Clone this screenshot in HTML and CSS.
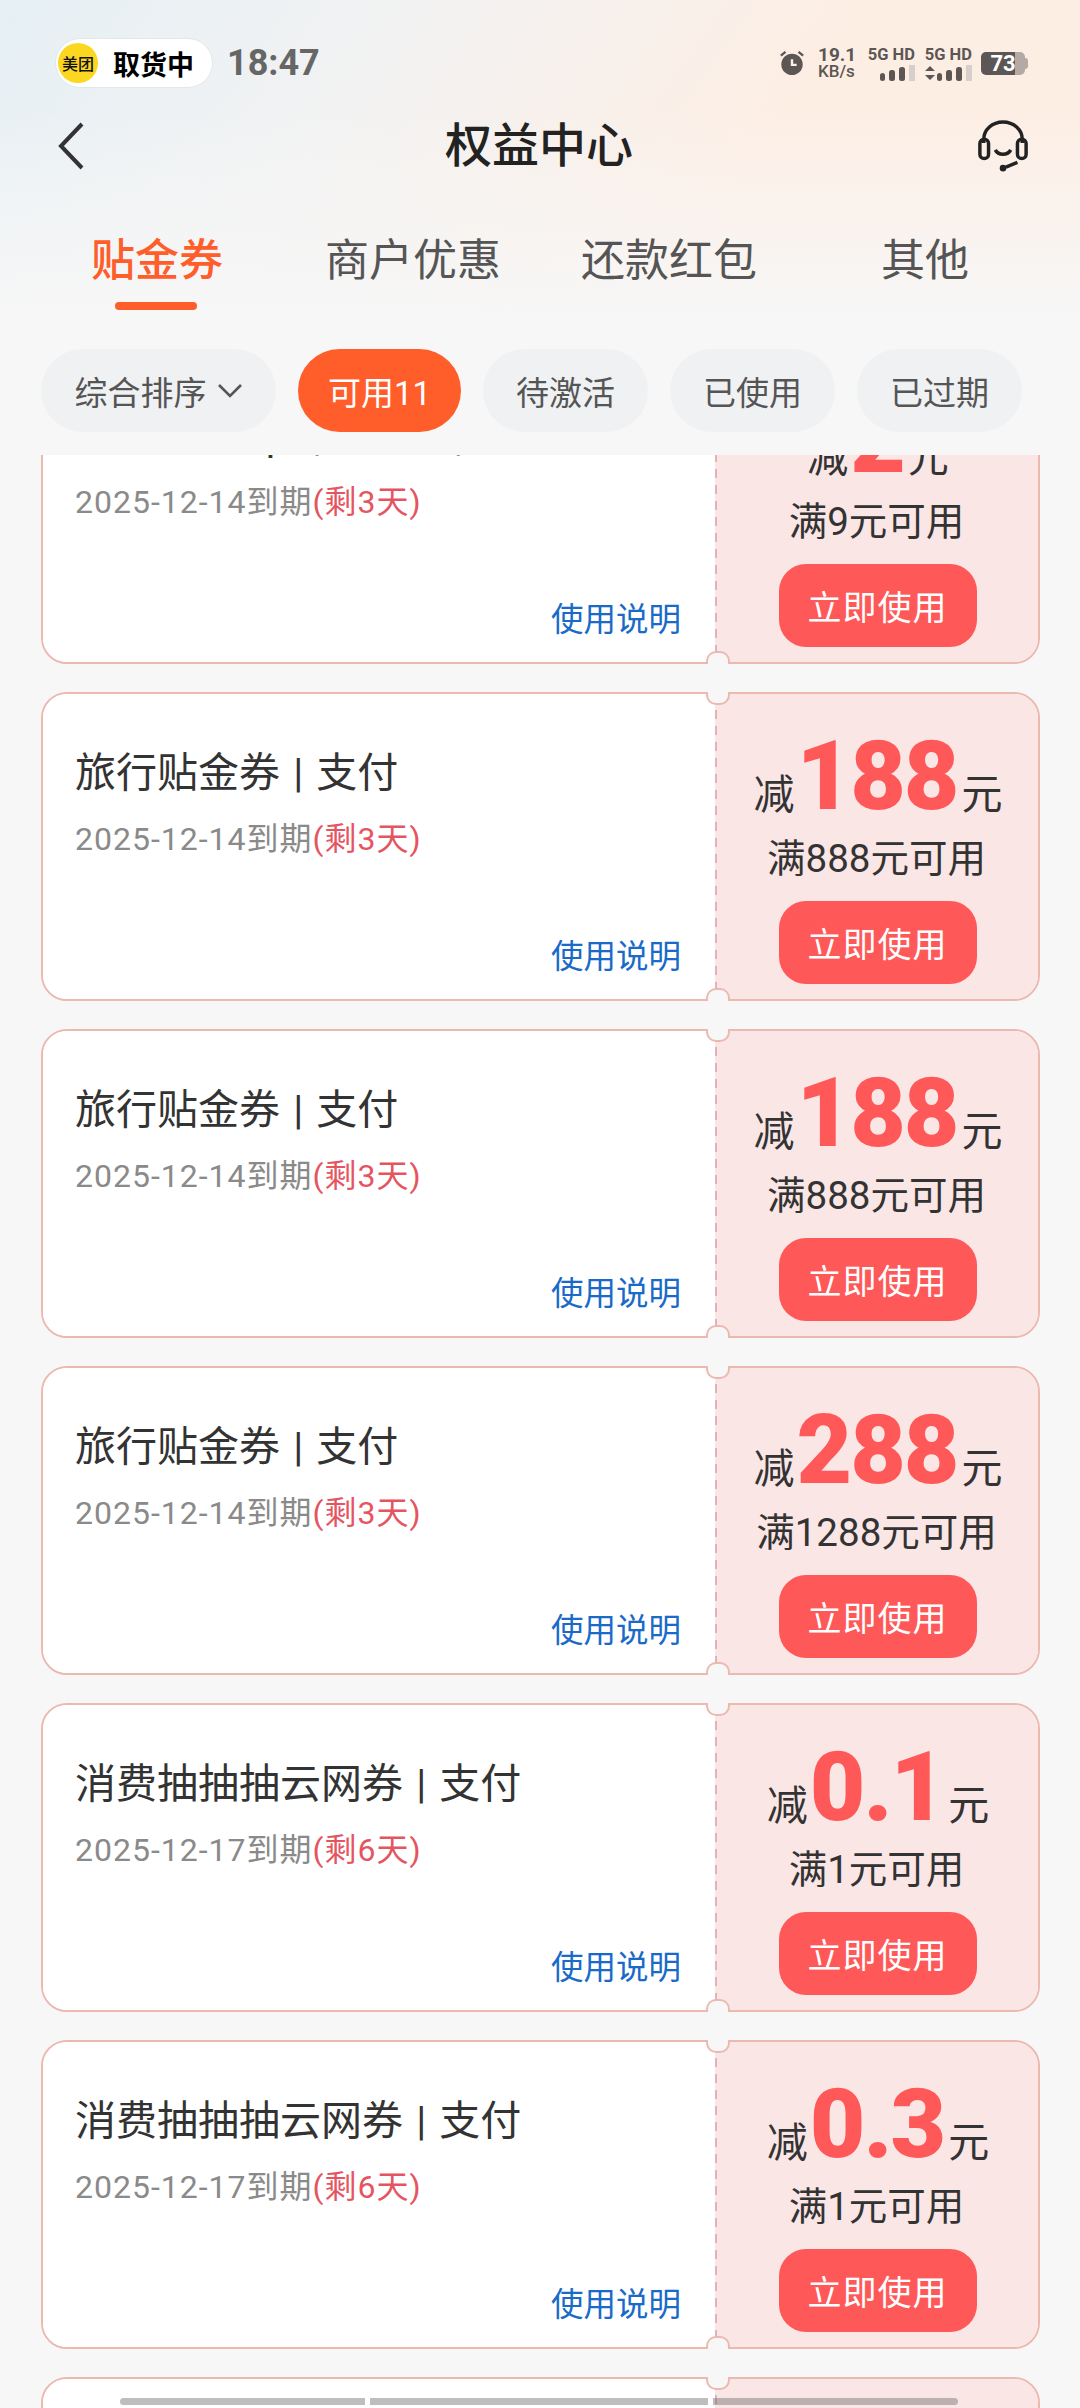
FILE: index.html
```html
<!DOCTYPE html>
<html lang="zh-CN">
<head>
    <meta charset="UTF-8">
    <meta name="viewport" content="width=device-width, initial-scale=1.0">
    <title>权益中心</title>
    <link rel="stylesheet" href="styles.css">
</head>
<body>
    <div class="header">
        <div class="status-bar">
            <div class="pill">
                <span class="pill-logo">美团</span>
                <span class="pill-text">取货中</span>
            </div>
            <span class="clock">18:47</span>
            <div class="status-right">
                <svg class="alarm" width="26" height="26" viewBox="0 0 28 28">
                    <circle cx="14" cy="15.5" r="11.5" fill="#5c5655"/>
                    <path d="M14 10v6h5" fill="none" stroke="#fdf0e8" stroke-width="2.6"/>
                    <path d="M2 6l5-4M26 6l-5-4" stroke="#5c5655" stroke-width="2.6"/>
                </svg>
                <div class="speed"><span>19.1</span><span class="speed-unit">KB/s</span></div>
                <div class="signal">
                    <span class="signal-label">5G HD</span>
                    <svg width="48" height="16" viewBox="0 0 48 16">
                        <rect x="13" y="8" width="5" height="8" rx="2.5" fill="#5c5655"/>
                        <rect x="22" y="5" width="6" height="11" rx="2.5" fill="#5c5655"/>
                        <rect x="32" y="2" width="6" height="14" rx="2.5" fill="#5c5655"/>
                        <rect x="42" y="0" width="6" height="16" fill="#d8cfca"/>
                    </svg>
                </div>
                <div class="signal">
                    <span class="signal-label">5G HD</span>
                    <svg width="48" height="16" viewBox="0 0 48 16">
                        <path d="M1 6l5-5 5 5zM1 10h10l-5 5z" fill="#5c5655"/>
                        <rect x="13" y="8" width="5" height="8" rx="2.5" fill="#5c5655"/>
                        <rect x="22" y="5" width="6" height="11" rx="2.5" fill="#5c5655"/>
                        <rect x="32" y="2" width="6" height="14" rx="2.5" fill="#5c5655"/>
                        <rect x="42" y="0" width="6" height="16" fill="#d8cfca"/>
                    </svg>
                </div>
                <div class="battery">
                    <span class="battery-level">73</span>
                    <span class="battery-cap"></span>
                </div>
            </div>
        </div>

        <div class="title-bar">
            <svg class="back" width="30" height="48" viewBox="0 0 30 48">
                <path d="M26 2L5 24l21 22" fill="none" stroke="#333" stroke-width="4"/>
            </svg>
            <h1 class="page-title">权益中心</h1>
            <svg class="service" width="52" height="52" viewBox="0 0 54 54">
                <path d="M7 24v-4a20 18 0 0 1 40 0v4" fill="none" stroke="#222" stroke-width="3.6"/>
                <rect x="3" y="20" width="9" height="20" rx="4.5" fill="none" stroke="#222" stroke-width="3.6"/>
                <rect x="42" y="20" width="9" height="20" rx="4.5" fill="none" stroke="#222" stroke-width="3.6"/>
                <path d="M19 31c3 6 13 6 16 0" fill="none" stroke="#222" stroke-width="3.6"/>
                <path d="M42 44l-12 5" fill="none" stroke="#222" stroke-width="3.6"/>
                <circle cx="27" cy="50" r="3.4" fill="#222"/>
            </svg>
        </div>

        <div class="tabs">
            <div class="tab active">贴金券</div>
            <div class="tab">商户优惠</div>
            <div class="tab">还款红包</div>
            <div class="tab">其他</div>
        </div>

        <div class="filters">
            <div class="chip sort">综合排序
                <svg width="26" height="16" viewBox="0 0 26 16"><path d="M2 2l11 11L24 2" fill="none" stroke="#555" stroke-width="2.6"/></svg>
            </div>
            <div class="chip selected">可用11</div>
            <div class="chip">待激活</div>
            <div class="chip">已使用</div>
            <div class="chip">已过期</div>
        </div>
    </div>

    <div class="coupon-list">
        <div class="coupon">
            <div class="coupon-left">
                <div class="coupon-title">外卖贴金Apl | 到店5 | 支付</div>
                <div class="coupon-date">2025-12-14到期<span class="remain">(剩3天)</span></div>
                <a class="coupon-help">使用说明</a>
            </div>
            <div class="coupon-right">
                <div class="amount">减<b>2</b>元</div>
                <div class="limit">满9元可用</div>
                <button class="use-btn">立即使用</button>
            </div>
        </div>
        <div class="coupon">
            <div class="coupon-left">
                <div class="coupon-title">旅行贴金券 | 支付</div>
                <div class="coupon-date">2025-12-14到期<span class="remain">(剩3天)</span></div>
                <a class="coupon-help">使用说明</a>
            </div>
            <div class="coupon-right">
                <div class="amount">减<b>188</b>元</div>
                <div class="limit">满888元可用</div>
                <button class="use-btn">立即使用</button>
            </div>
        </div>
        <div class="coupon">
            <div class="coupon-left">
                <div class="coupon-title">旅行贴金券 | 支付</div>
                <div class="coupon-date">2025-12-14到期<span class="remain">(剩3天)</span></div>
                <a class="coupon-help">使用说明</a>
            </div>
            <div class="coupon-right">
                <div class="amount">减<b>188</b>元</div>
                <div class="limit">满888元可用</div>
                <button class="use-btn">立即使用</button>
            </div>
        </div>
        <div class="coupon">
            <div class="coupon-left">
                <div class="coupon-title">旅行贴金券 | 支付</div>
                <div class="coupon-date">2025-12-14到期<span class="remain">(剩3天)</span></div>
                <a class="coupon-help">使用说明</a>
            </div>
            <div class="coupon-right">
                <div class="amount">减<b>288</b>元</div>
                <div class="limit">满1288元可用</div>
                <button class="use-btn">立即使用</button>
            </div>
        </div>
        <div class="coupon">
            <div class="coupon-left">
                <div class="coupon-title">消费抽抽抽云网券 | 支付</div>
                <div class="coupon-date">2025-12-17到期<span class="remain">(剩6天)</span></div>
                <a class="coupon-help">使用说明</a>
            </div>
            <div class="coupon-right">
                <div class="amount">减<b>0.1</b>元</div>
                <div class="limit">满1元可用</div>
                <button class="use-btn">立即使用</button>
            </div>
        </div>
        <div class="coupon">
            <div class="coupon-left">
                <div class="coupon-title">消费抽抽抽云网券 | 支付</div>
                <div class="coupon-date">2025-12-17到期<span class="remain">(剩6天)</span></div>
                <a class="coupon-help">使用说明</a>
            </div>
            <div class="coupon-right">
                <div class="amount">减<b>0.3</b>元</div>
                <div class="limit">满1元可用</div>
                <button class="use-btn">立即使用</button>
            </div>
        </div>
        <div class="coupon">
            <div class="coupon-left"></div>
            <div class="coupon-right"></div>
        </div>
    </div>

    <div class="scrollbar">
        <span class="scroll-seg seg-a"></span>
        <span class="scroll-seg seg-b"></span>
        <span class="scroll-seg seg-c"></span>
    </div>
</body>
</html>
```

FILE: styles.css
```css
*{
    box-sizing: border-box;
}

html, body{
    height: 100%;
}

body{
    margin: 0;
    height: 2408px;
    overflow: hidden;
    position: relative;
    background: #f7f7f7;
    font-family: Roboto, "Noto Sans CJK SC", sans-serif;
    color: #333;
}

.header{
    height: 455px;
    padding: 38px 41px 0;
    background:
        linear-gradient(to bottom, rgba(247, 247, 247, 0) 0, rgba(247, 247, 247, 0) 110px, #f7f7f7 320px),
        linear-gradient(125deg, #e6f0f5 0%, #f2f2f2 30%, #fdeee4 62%, #fdeee4 100%);
}

/* status bar */
.status-bar{
    display: flex;
    align-items: center;
    height: 50px;
    margin-left: 14px;
}

.pill{
    display: flex;
    align-items: center;
    width: 158px;
    height: 50px;
    padding-left: 2px;
    background: #fff;
    border: 1px solid #e6e6e6;
    border-radius: 25px;
}

.pill-logo{
    display: flex;
    align-items: center;
    justify-content: center;
    width: 40px;
    height: 40px;
    border-radius: 50%;
    background: #fcd722;
    color: #111;
    font-size: 16px;
    font-weight: 500;
}

.pill-text{
    margin-left: 15px;
    font-size: 27px;
    font-weight: 700;
    color: #000;
}

.clock{
    margin-left: 14px;
    font-size: 36px;
    font-weight: 700;
    color: #666;
}

.status-right{
    display: flex;
    align-items: center;
    margin-left: auto;
    margin-right: 11px;
    color: #5c5655;
}

.speed{
    display: flex;
    flex-direction: column;
    width: 42px;
    margin: 0 7px 0 13px;
    font-size: 19px;
    font-weight: 700;
    line-height: 17px;
}

.speed-unit{
    font-size: 17px;
    font-weight: 500;
}

.signal{
    display: flex;
    flex-direction: column;
    align-items: flex-end;
    width: 48px;
    margin-right: 9px;
    font-size: 16.5px;
    font-weight: 700;
    line-height: 17px;
}

.signal-label{
    white-space: nowrap;
}

.signal svg{
    margin-top: 2px;
    display: block;
}

.battery{
    display: flex;
    align-items: center;
}

.battery-level{
    display: block;
    width: 44px;
    height: 23px;
    border-radius: 5px;
    background: linear-gradient(to right, #5c5655 77%, #b3aaa5 77%);
    color: #fff;
    font-size: 22px;
    font-weight: 700;
    line-height: 23px;
    text-align: center;
}

.battery-cap{
    width: 3px;
    height: 11px;
    border-radius: 0 3px 3px 0;
    background: #b3aaa5;
}

/* title */
.title-bar{
    display: grid;
    grid-template-columns: 1fr auto 1fr;
    align-items: center;
    height: 54px;
    margin-top: 31px;
    padding: 0 10px 0 12px;
}

.back{
    margin-left: 3px;
}

.service{
    justify-self: end;
}

.page-title{
    margin: 0 4px 0 0;
    font-size: 47px;
    line-height: 54px;
    font-weight: 500;
    color: #222;
}

/* tabs */
.tabs{
    display: grid;
    grid-template-columns: repeat(4, 256px);
    margin: 58px -12px 0;
    height: 84px;
}

.tab{
    text-align: center;
    font-size: 44px;
    line-height: 60px;
    color: #555;
}

.tab.active{
    position: relative;
    color: #ff5d2a;
    font-weight: 500;
}

.tab.active::after{
    content: "";
    position: absolute;
    left: 86px;
    top: 71px;
    width: 82px;
    height: 8px;
    border-radius: 4px;
    background: #ff5d2a;
}

/* filters */
.filters{
    display: flex;
    margin-top: 34px;
    gap: 22px;
}

.chip{
    display: flex;
    align-items: center;
    justify-content: center;
    gap: 10px;
    width: 165px;
    height: 83px;
    border-radius: 42px;
    background: #f0f1f3;
    color: #555;
    font-size: 33px;
}

.chip.sort{
    width: 235px;
}

.chip.selected{
    width: 163px;
    background: #ff5d2a;
    color: #fff;
}

/* coupons */
.coupon-list{
    height: 1953px;
    padding: 0 40px 0 41px;
    overflow: hidden;
}

.coupon{
    display: flex;
    height: 309px;
    margin-bottom: 28px;
    border-radius: 26px;
    position: relative;
    border: 2px solid #ecb9b0;
    background: #fff;
}

.coupon:first-child{
    margin-top: -100px;
}

/* the two punched notches on the tear line, they sit over the card border */
.coupon::before,
.coupon::after{
    content: "";
    position: absolute;
    left: 663px;
    width: 20px;
    height: 11px;
    background: #f7f7f7;
    border: 2px solid #ecb9b0;
    z-index: 1;
}

.coupon::before{
    top: -2px;
    border-top: 0;
    border-radius: 0 0 10px 10px;
}

.coupon::after{
    bottom: -2px;
    border-bottom: 0;
    border-radius: 10px 10px 0 0;
}

.coupon-left{
    display: flex;
    flex-direction: column;
    width: 672px;
    padding: 50px 34px 0 32px;
    background: #fff;
    border-radius: 24px 0 0 24px;
}

.coupon-title{
    font-size: 41px;
    line-height: 58px;
    word-spacing: 3px;
    color: #333;
    white-space: nowrap;
}

.coupon-date{
    margin-top: 14px;
    font-size: 32px;
    line-height: 46px;
    letter-spacing: 1px;
    color: #8a8a8a;
}

.remain{
    color: #e5555f;
}

.coupon-help{
    margin-top: auto;
    margin-bottom: 19px;
    align-self: flex-end;
    font-size: 32.5px;
    line-height: 46px;
    color: #1a6ac8;
}

.coupon-right{
    flex: 1;
    display: flex;
    flex-direction: column;
    align-items: center;
    padding-top: 32px;
    border-radius: 0 24px 24px 0;
    background: repeating-linear-gradient(to bottom, #e3b0bb 0, #e3b0bb 9px, transparent 9px, transparent 16px) left top / 2px 100% no-repeat, #fbe6e6;
}

.amount{
    display: flex;
    align-items: baseline;
    height: 100px;
    margin-left: 3px;
    font-size: 41px;
    line-height: 100px;
    color: #333;
}

.amount b{
    margin: 0 4px 0 2px;
    font-size: 96px;
    font-weight: 900;
    letter-spacing: -2px;
    color: #ff5858;
}

.limit{
    margin-top: 8px;
    font-size: 38.5px;
    line-height: 50px;
    color: #333;
}

.use-btn{
    width: 198px;
    height: 83px;
    margin-top: 17px;
    margin-left: 2px;
    border: 0;
    border-radius: 27px;
    background: #ff5858;
    color: #fff;
    font-family: inherit;
    font-size: 34px;
    letter-spacing: 1px;
}

/* scrollbar overlay */
.scrollbar{
    position: absolute;
    left: 120px;
    top: 2398px;
    display: flex;
    gap: 5px;
}

.scroll-seg{
    height: 7px;
    background: rgba(110, 110, 110, .45);
}

.seg-a{
    width: 245px;
    border-radius: 4px 0 0 4px;
}

.seg-b{
    width: 338px;
}

.seg-c{
    width: 245px;
    border-radius: 0 4px 4px 0;
}
```
